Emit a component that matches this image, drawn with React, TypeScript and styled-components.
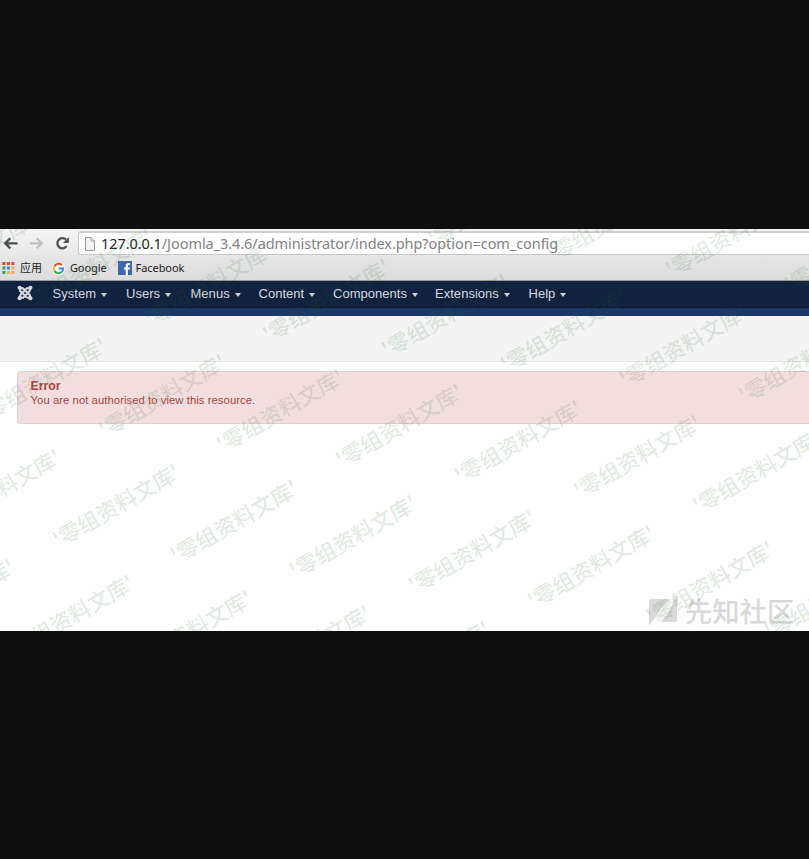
import React from "react";
import styled, { createGlobalStyle } from "styled-components";

const GlobalStyle = createGlobalStyle`
  html, body { margin: 0; padding: 0; background: #0e0e0e; }
  * { box-sizing: border-box; }
`;

const Page = styled.div`
  width: 809px;
  height: 859px;
  padding-top: 229px;
  background: #0e0e0e;
  overflow: hidden;
`;

const Screen = styled.main`
  position: relative;
  display: flex;
  flex-direction: column;
  height: 402px;
  overflow: hidden;
  background: #fefefe;
`;

const AddressRow = styled.div`
  display: flex;
  align-items: flex-start;
  height: 26px;
  padding-top: 2px;
  background: linear-gradient(#f4f4f4, #e9e9e9);
`;

const BrowserButtons = styled.div`
  display: flex;
  width: 78px;
  flex: none;
  padding: 5px 0 0 3px;
  gap: 11px;
`;

const AddressField = styled.div`
  display: flex;
  flex: 1;
  height: 24px;
  padding: 4px 0 0 5px;
  border: 1px solid #c9c9c9;
  border-top: 2px solid #d0d0d0;
  border-right: 0;
  border-radius: 3px 0 0 3px;
  background: #fff;
`;

const Url = styled.span`
  margin: -5px 0 0 5px;
  font: 14.5px/22px "Noto Sans", "Open Sans", sans-serif;
  letter-spacing: -0.07px;
  white-space: nowrap;
  color: #828282;
`;

const Host = styled.span`
  color: #262626;
`;

const Bookmarks = styled.div`
  display: flex;
  align-items: center;
  height: 26px;
  padding: 1px 0 0 2px;
  border-bottom: 1px solid #9b9da0;
  background: linear-gradient(#e6e6e6, #dcdcdc);
`;

const Bookmark = styled.div<{ $gap: number; $after: number }>`
  display: flex;
  align-items: center;
  gap: ${(p) => p.$gap}px;
  margin-right: ${(p) => p.$after}px;
  font: 11px/16px "Noto Sans", "Noto Sans CJK SC", sans-serif;
  letter-spacing: -0.07px;
  color: #222;
`;

const NavBar = styled.nav`
  display: flex;
  height: 27px;
  padding: 0 0 1px 17px;
  border-bottom: 1px solid #0e1a30;
  background: #11223f;
`;

const BrandIcon = styled.div`
  width: 35.5px;
  padding-top: 4px;
`;

const NavItem = styled.div<{ $width: number }>`
  display: flex;
  width: ${(p) => p.$width}px;
  font: 13px/25px "Liberation Sans", Arial, sans-serif;
  letter-spacing: 0.03px;
  color: #d6dae0;
  white-space: nowrap;
`;

const Caret = styled.i`
  margin: 12px 0 0 5px;
  width: 0;
  height: 0;
  border: 3.5px solid transparent;
  border-top: 4px solid #d0d5dc;
  border-bottom: 0;
`;

const BlueStrip = styled.div`
  height: 8px;
  background: #1a3867;
`;

const SubHeader = styled.header`
  height: 46px;
  border-bottom: 1px solid #e4e4e4;
  background: #f4f4f4;
`;

const Content = styled.section`
  padding: 9px 0 0 17px;
`;

const Alert = styled.div`
  height: 53px;
  padding: 7px 0 0 12.5px;
  border: 1px solid #e6cfd1;
  border-right: 0;
  border-radius: 4px 0 0 4px;
  background: #f2dede;
  color: #a94644;
  font: 11.3px/14px "Liberation Sans", Arial, sans-serif;
`;

const AlertTitle = styled.h4`
  margin: 0;
  font-size: 12.3px;
  line-height: 14px;
`;

const AlertText = styled.p`
  margin: 0;
  letter-spacing: 0.05px;
`;

const Overlay = styled.div`
  position: absolute;
  inset: 0;
  overflow: hidden;
  pointer-events: none;
`;

const Watermark = styled.span<{ $x: number; $y: number }>`
  position: absolute;
  left: ${(p) => p.$x}px;
  top: ${(p) => p.$y}px;
  font: 500 21.6px/30px "Noto Sans CJK SC", sans-serif;
  white-space: nowrap;
  color: rgba(35, 95, 45, 0.14);
  transform: translate(-50%, -50%) rotate(-30deg);
`;

const Community = styled.div`
  position: absolute;
  left: 648px;
  top: 363px;
  display: flex;
  gap: 8px;
  font: 500 27.3px/36px "Noto Sans CJK SC", sans-serif;
  color: #d9d9d9;
  white-space: nowrap;
`;

const menus = [
  { label: "System", width: 73.5 },
  { label: "Users", width: 64.5 },
  { label: "Menus", width: 68 },
  { label: "Content", width: 74.5 },
  { label: "Components", width: 102 },
  { label: "Extensions", width: 93.5 },
  { label: "Help", width: 60 },
];

const marks: { x: number; y: number }[] = [];
for (let row = -3; row <= 4; row++) {
  for (let col = -4; col <= 8; col++) {
    const x = 115.6 + col * 118.8 + row * 46;
    const y = 276.2 + col * 15.3 - row * 110.5;
    if (x > -60 && x < 869 && y > -40 && y < 442) marks.push({ x, y });
  }
}

const BackIcon = () => (
  <svg width="15" height="15" viewBox="0 0 15 15" fill="none" stroke="#4d4d4d" strokeWidth="2.3">
    <path d="M7.3 2.2 2.2 7.3l5.1 5.1M2.5 7.3H14.6" />
  </svg>
);

const ForwardIcon = () => (
  <svg width="15" height="15" viewBox="0 0 15 15" fill="none" stroke="#c0c0c0" strokeWidth="2.3">
    <path d="M7.7 2.2l5.1 5.1-5.1 5.1M12.5 7.3H1" />
  </svg>
);

const ReloadIcon = () => (
  <svg width="15" height="15" viewBox="0 0 15 15">
    <path d="M11.6 10.2A5.1 5.1 0 1 1 11 3.6" fill="none" stroke="#505050" strokeWidth="2.3" />
    <path d="M13.8 1v6H7.9z" fill="#505050" />
  </svg>
);

const PageIcon = () => (
  <svg width="12" height="14" viewBox="0 0 12 14" fill="#f3f3f3" stroke="#9a9a9a">
    <path d="M1.5.5H7L10.5 4v9.5h-9zM7 .5V4h3.5" />
  </svg>
);

const appColors = ["#e2453c", "#e2453c", "#e8453c", "#31a35b", "#3d85e9", "#f0b43a", "#31a35b", "#f0b43a", "#f0b43a"];
const AppsIcon = () => (
  <svg width="13" height="13" viewBox="0 0 13 13">
    {appColors.map((c, i) => (
      <rect key={i} x={0.4 + (i % 3) * 4.5} y={(i - (i % 3)) * 1.5} width="3" height="3" fill={c} />
    ))}
  </svg>
);

const GoogleIcon = () => (
  <svg width="13" height="13" viewBox="0 0 13 13">
    <circle cx="6.5" cy="6.5" r="6.5" fill="#fafafa" />
    <g fill="none" strokeWidth="2">
      <path d="M2.4 4.2A4.6 4.6 0 0 1 9.9 3.1" stroke="#e54336" />
      <path d="M2.4 8.8a4.6 4.6 0 0 1 0-4.6" stroke="#f4b825" />
      <path d="M9.6 9.9a4.6 4.6 0 0 1-7.2-1.1" stroke="#35a853" />
      <path d="M6.6 6.6h4.5a4.6 4.6 0 0 1-1.5 3.3" stroke="#4285f4" />
    </g>
  </svg>
);

const FacebookIcon = () => (
  <svg width="14" height="14" viewBox="0 0 14 14">
    <rect width="14" height="14" fill="#4267b2" />
    <path d="M7.7 14V8.5H6V6.4h1.7V4.9c0-1.9 1.1-2.8 2.8-2.8h1.6v2h-1.1c-.8 0-1.1.4-1.1 1.1v1.2H12l-.3 2.1H9.9V14z" fill="#fff" />
  </svg>
);

const JoomlaIcon = () => (
  <svg width="16" height="16" viewBox="0 0 16 16" fill="none" stroke="#d5d9de" strokeWidth="2.1">
    <path d="M3.2 7V5.2C3.2 3 5.2 2.4 6.7 3.9l5.5 5.5M9 3.2h1.8c2.2 0 2.8 2 1.3 3.5l-5.5 5.5M12.8 9v1.8c0 2.2-2 2.8-3.5 1.3L3.8 6.6M7 12.8H5.2c-2.2 0-2.8-2-1.3-3.5l5.5-5.5" />
    <g fill="#d5d9de" stroke="none">
      <circle cx="2.6" cy="2.8" r="2.1" /><circle cx="13.4" cy="2.8" r="2.1" />
      <circle cx="2.6" cy="13.2" r="2.1" /><circle cx="13.4" cy="13.2" r="2.1" />
    </g>
  </svg>
);

const CommunityIcon = () => (
  <svg width="29" height="34" viewBox="0 0 29 34" fill="#d9d9d9">
    <path d="M1 7h20.5L12 17.5 7 26 1 34zM29 1v29H13.5L22 18z" />
    <path d="M7 26l5-8.5L21.5 7 29 1l-7 17-8.5 12H9z" fillOpacity=".2" />
  </svg>
);

export default function App() {
  return (
    <Page>
      <GlobalStyle />
      <Screen>
        <AddressRow>
          <BrowserButtons><BackIcon /><ForwardIcon /><ReloadIcon /></BrowserButtons>
          <AddressField>
            <PageIcon />
            <Url><Host>127.0.0.1</Host>/Joomla_3.4.6/administrator/index.php?option=com_config</Url>
          </AddressField>
        </AddressRow>
        <Bookmarks>
          <Bookmark $gap={5} $after={10}><AppsIcon />应用</Bookmark>
          <Bookmark $gap={5} $after={11}><GoogleIcon />Google</Bookmark>
          <Bookmark $gap={4} $after={0}><FacebookIcon />Facebook</Bookmark>
        </Bookmarks>
        <NavBar>
          <BrandIcon><JoomlaIcon /></BrandIcon>
          {menus.map((m) => (
            <NavItem key={m.label} $width={m.width}>{m.label}<Caret /></NavItem>
          ))}
        </NavBar>
        <BlueStrip />
        <SubHeader />
        <Content>
          <Alert>
            <AlertTitle>Error</AlertTitle>
            <AlertText>You are not authorised to view this resource.</AlertText>
          </Alert>
        </Content>
        <Overlay>
          <Community><CommunityIcon />先知社区</Community>
          {marks.map((m) => (
            <Watermark key={`${m.x},${m.y}`} $x={m.x} $y={m.y}>'零组资料文库'</Watermark>
          ))}
        </Overlay>
      </Screen>
    </Page>
  );
}
